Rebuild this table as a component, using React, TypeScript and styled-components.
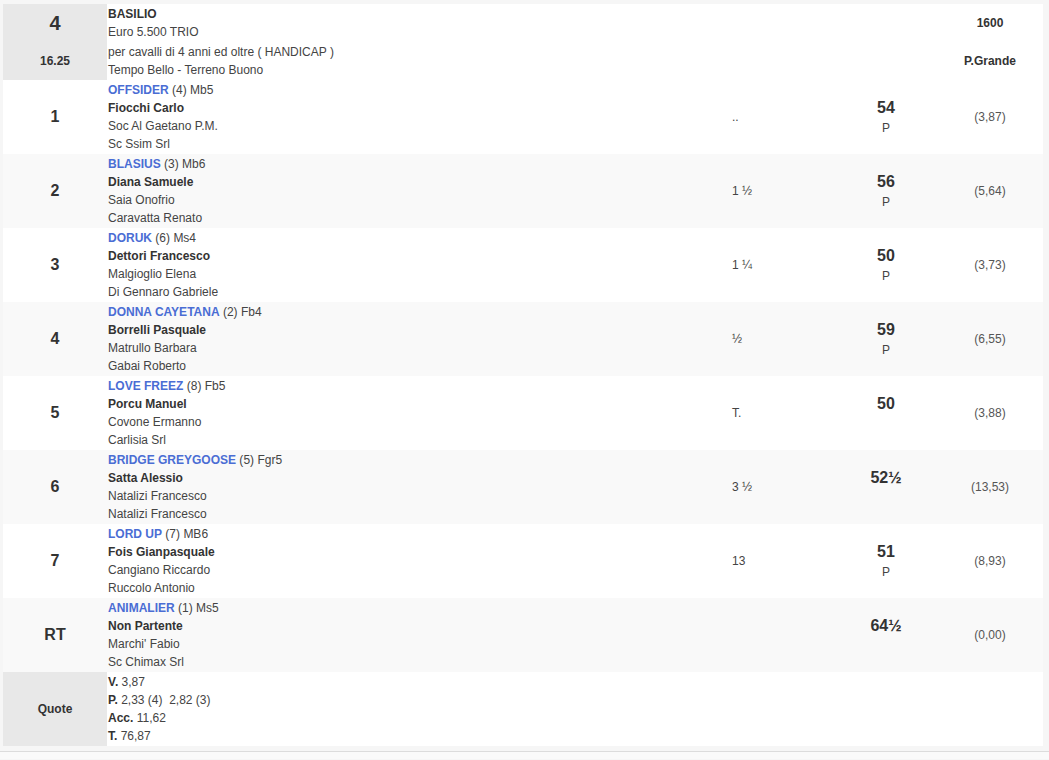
import React from "react";
import styled, { createGlobalStyle } from "styled-components";

type Runner = {
  pos: string;
  horse: string;
  draw: number;
  tag: string;
  jockey: string;
  trainer: string;
  owner: string;
  gap: string;
  weight: string;
  p: boolean;
  odds: string;
};

const runners: Runner[] = [
  { pos: "1", horse: "OFFSIDER", draw: 4, tag: "Mb5", jockey: "Fiocchi Carlo", trainer: "Soc Al Gaetano P.M.", owner: "Sc Ssim Srl", gap: "..", weight: "54", p: true, odds: "(3,87)" },
  { pos: "2", horse: "BLASIUS", draw: 3, tag: "Mb6", jockey: "Diana Samuele", trainer: "Saia Onofrio", owner: "Caravatta Renato", gap: "1 ½", weight: "56", p: true, odds: "(5,64)" },
  { pos: "3", horse: "DORUK", draw: 6, tag: "Ms4", jockey: "Dettori Francesco", trainer: "Malgioglio Elena", owner: "Di Gennaro Gabriele", gap: "1 ¼", weight: "50", p: true, odds: "(3,73)" },
  { pos: "4", horse: "DONNA CAYETANA", draw: 2, tag: "Fb4", jockey: "Borrelli Pasquale", trainer: "Matrullo Barbara", owner: "Gabai Roberto", gap: "½", weight: "59", p: true, odds: "(6,55)" },
  { pos: "5", horse: "LOVE FREEZ", draw: 8, tag: "Fb5", jockey: "Porcu Manuel", trainer: "Covone Ermanno", owner: "Carlisia Srl", gap: "T.", weight: "50", p: false, odds: "(3,88)" },
  { pos: "6", horse: "BRIDGE GREYGOOSE", draw: 5, tag: "Fgr5", jockey: "Satta Alessio", trainer: "Natalizi Francesco", owner: "Natalizi Francesco", gap: "3 ½", weight: "52½", p: false, odds: "(13,53)" },
  { pos: "7", horse: "LORD UP", draw: 7, tag: "MB6", jockey: "Fois Gianpasquale", trainer: "Cangiano Riccardo", owner: "Ruccolo Antonio", gap: "13", weight: "51", p: true, odds: "(8,93)" },
  { pos: "RT", horse: "ANIMALIER", draw: 1, tag: "Ms5", jockey: "Non Partente", trainer: "Marchi' Fabio", owner: "Sc Chimax Srl", gap: "", weight: "64½", p: false, odds: "(0,00)" },
];

const Global = createGlobalStyle`
  body {
    margin: 0;
    background: #f6f6f6;
    font-family: "Liberation Sans", Arial, sans-serif;
    font-size: 12px;
    color: #333;
  }
`;

const Page = styled.div`
  padding: 4px 6px 0 3px;
`;

const Table = styled.div`
  width: 1040px;
  background: #fff;
  color: #444;
`;

const Footer = styled.div`
  margin-top: 5px;
  border-top: 1px solid #dcdcdc;
  height: 7px;
  background: #fafafa;
`;

const cols = "104px 618px 110px 102px 106px";

const Header = styled.div`
  display: grid;
  grid-template-columns: ${cols};
  grid-template-rows: 38px 38px;
  background: #fff;
`;

const Row = styled.div<{ $alt?: boolean }>`
  display: grid;
  grid-template-columns: ${cols};
  height: 74px;
  background: ${(p) => (p.$alt ? "#f9f9f9" : "#fff")};
`;

const GrayCell = styled.div`
  background: #e8e8e8;
  display: flex;
  align-items: center;
  justify-content: center;
  font-weight: bold;
  color: #333;
`;

const RaceNo = styled(GrayCell)`
  font-size: 20px;
  grid-row: 1;
  grid-column: 1;
`;

const RaceTime = styled(GrayCell)`
  font-size: 12px;
  grid-row: 2;
  grid-column: 1;
`;

const Lines = styled.div<{ $row?: number }>`
  grid-column: 2;
  grid-row: ${(p) => p.$row ?? "auto"};
  padding: 1px 0 1px 1px;
  line-height: 18px;

  b {
    color: #333;
  }
`;

const Title = styled.div`
  font-weight: bold;
  color: #333;
`;

const HeadRight = styled.div<{ $row: number }>`
  grid-column: 5;
  grid-row: ${(p) => p.$row};
  display: flex;
  align-items: center;
  justify-content: center;
  font-weight: bold;
  color: #333;
`;

const Pos = styled.div`
  display: flex;
  align-items: center;
  justify-content: center;
  font-weight: bold;
  font-size: 16px;
  color: #333;
`;

const Horse = styled.span`
  color: #4a6dd4;
  font-weight: bold;
`;

const Jockey = styled.div`
  font-weight: bold;
  color: #333;
`;

const Gap = styled.div`
  display: flex;
  align-items: center;
  padding-left: 7px;
`;

const Weight = styled.div`
  display: flex;
  flex-direction: column;
  justify-content: center;
  align-items: center;
  line-height: 20px;
  padding-top: 1px;
`;

const Kg = styled.div`
  font-weight: bold;
  font-size: 16px;
  color: #333;
`;

const Odds = styled.div`
  display: flex;
  align-items: center;
  justify-content: center;
  color: #555;
`;

const QuoteCell = styled(GrayCell)``;

export default function App() {
  return (
    <>
      <Global />
      <Page>
        <Table>
          <Header>
            <RaceNo>4</RaceNo>
            <RaceTime>16.25</RaceTime>
            <Lines $row={1}>
              <Title>BASILIO</Title>
              <div>Euro 5.500 TRIO</div>
            </Lines>
            <Lines $row={2}>
              <div>per cavalli di 4 anni ed oltre ( HANDICAP )</div>
              <div>Tempo Bello - Terreno Buono</div>
            </Lines>
            <HeadRight $row={1}>1600</HeadRight>
            <HeadRight $row={2}>P.Grande</HeadRight>
          </Header>
          {runners.map((r, i) => (
            <Row key={r.horse} $alt={i % 2 === 1}>
              <Pos>{r.pos}</Pos>
              <Lines>
                <div>
                  <Horse>{r.horse}</Horse> ({r.draw}) {r.tag}
                </div>
                <Jockey>{r.jockey}</Jockey>
                <div>{r.trainer}</div>
                <div>{r.owner}</div>
              </Lines>
              <Gap>{r.gap}</Gap>
              <Weight>
                <Kg>{r.weight}</Kg>
                <div>{r.p ? "P" : "\u00a0"}</div>
              </Weight>
              <Odds>{r.odds}</Odds>
            </Row>
          ))}
          <Row>
            <QuoteCell>Quote</QuoteCell>
            <Lines>
              <div><b>V.</b> 3,87</div>
              <div><b>P.</b> 2,33 (4)&nbsp; 2,82 (3)</div>
              <div><b>Acc.</b> 11,62</div>
              <div><b>T.</b> 76,87</div>
            </Lines>
          </Row>
        </Table>
      </Page>
      <Footer />
    </>
  );
}
